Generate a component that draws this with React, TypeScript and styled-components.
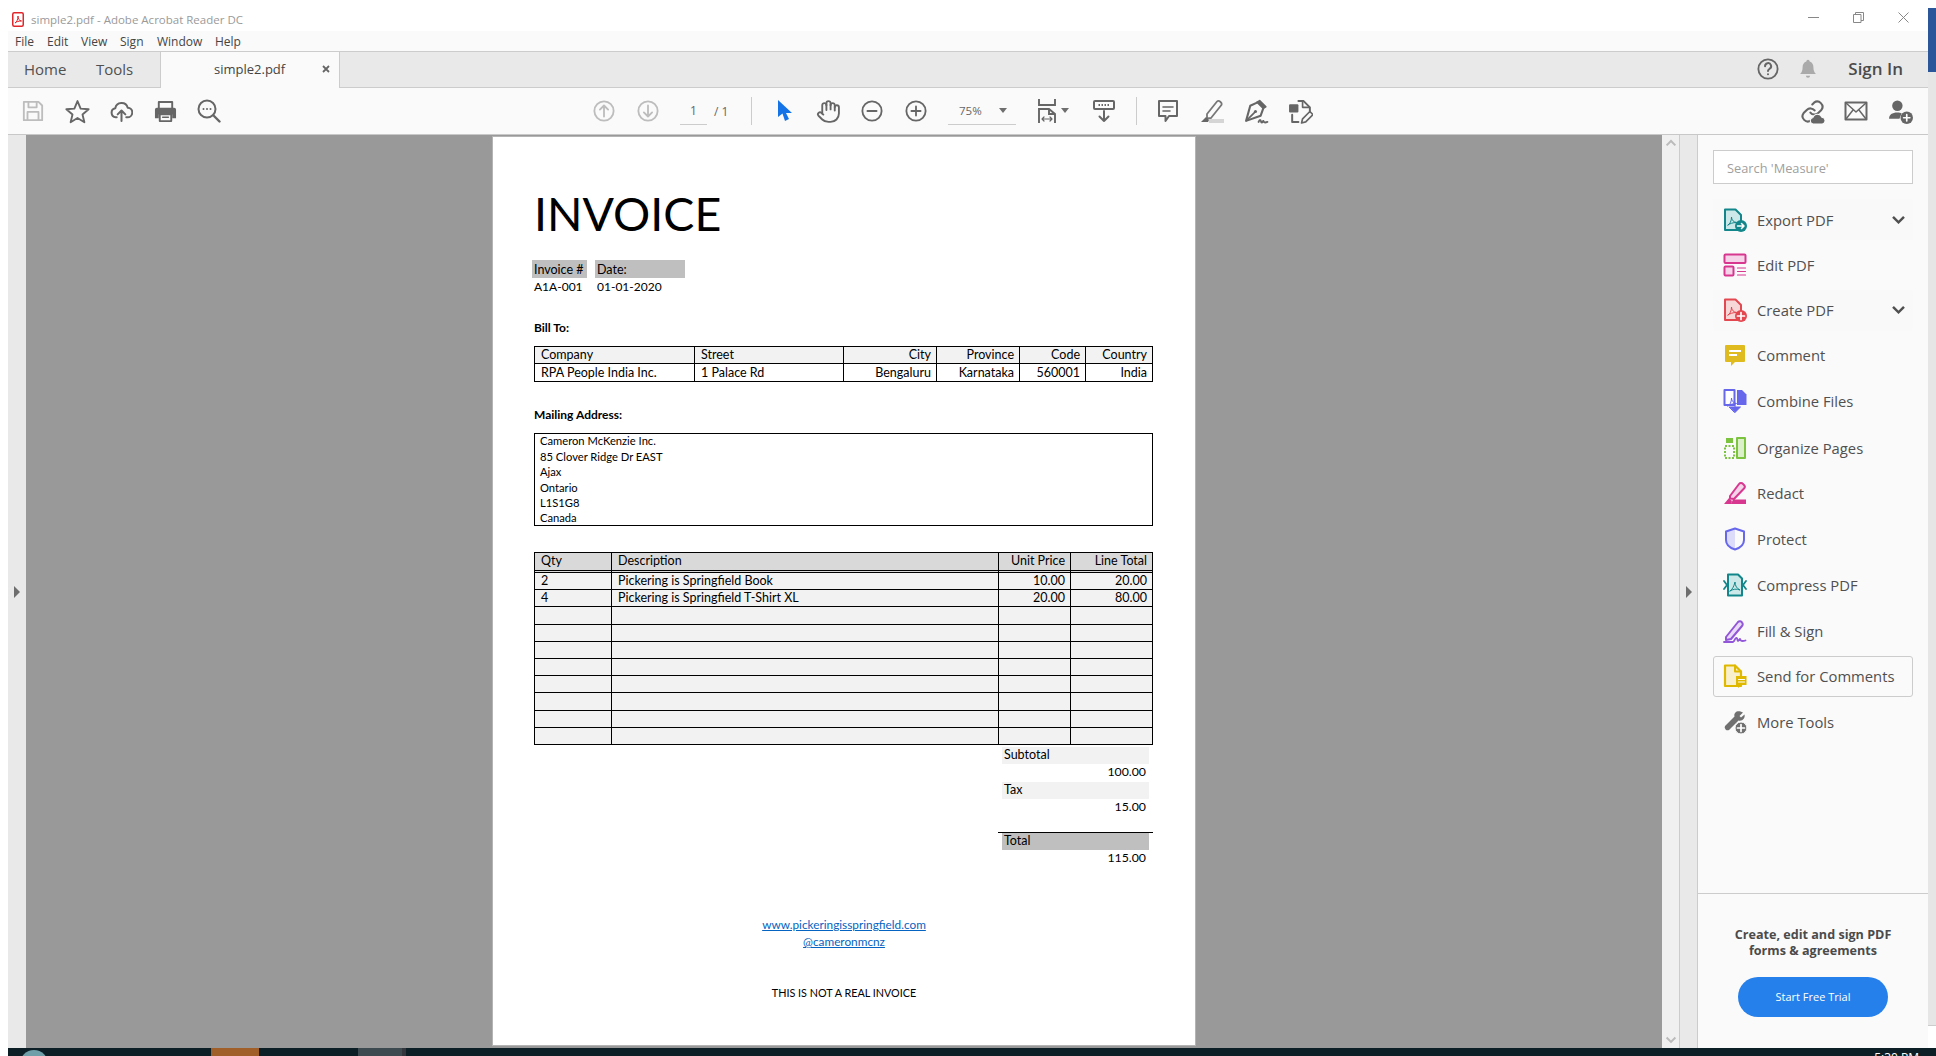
import React from "react";
import styled, { createGlobalStyle } from "styled-components";
import { Hand } from "lucide-react";

const Global = createGlobalStyle`
  html, body { margin: 0; padding: 0; background: #fff; overflow: hidden; }
  * { box-sizing: border-box; }
`;

const UI = `"Open Sans", "Noto Sans", sans-serif`;
const DOC = `Lato, "Open Sans", sans-serif`;

const Shell = styled.div`
  display: grid;
  width: 1936px;
  height: 1056px;
  grid-template-columns: 8px 1920px 8px;
  grid-template-rows: 1048px 8px;
  overflow: hidden;
  font-family: ${UI};
  color: #4b4b4b;
  background: #fff;
`;
const Win = styled.div`
  grid-column: 2;
  grid-row: 1;
  display: flex;
  flex-direction: column;
  min-height: 0;
`;
const Edge = styled.div`
  grid-column: 3;
  grid-row: 1;
  display: flex;
  flex-direction: column;
`;
const EdgeBlue = styled.div`
  margin-top: 8px;
  height: 64px;
  background: #2b579a;
`;
const EdgeGray = styled.div`
  height: 954px;
  background: #e6e6e6;
  border-bottom: 1px solid #ccc;
`;
const TitleBar = styled.div`
  height: 31px;
  flex: none;
  display: flex;
  align-items: center;
  padding: 8px 0 0 4px;
  background: #fff;
`;
const TitleText = styled.span`
  margin-left: 7px;
  font-size: 11.5px;
  color: #9a9a9a;
`;
const WinControls = styled.div`
  margin-left: auto;
  display: flex;
  margin-right: 19px;
  margin-top: -5px;
  gap: 34px;
  align-items: center;
`;
const MenuBar = styled.div`
  height: 21px;
  flex: none;
  display: flex;
  align-items: center;
  padding-left: 7px;
  background: #fafafa;
  border-bottom: 1px solid #ccc;
`;
const MenuItem = styled.span<{ $w: number }>`
  width: ${(p) => p.$w}px;
  font-size: 12px;
  color: #444;
`;
const TabBar = styled.div`
  height: 36px;
  flex: none;
  display: flex;
  background: #e9e9e9;
  border-bottom: 1px solid #ccc;
  font-size: 15px;
  align-items: stretch;
`;
const NavTab = styled.div<{ $w: number; $pl: number }>`
  width: ${(p) => p.$w}px;
  padding: 0 0 2px ${(p) => p.$pl}px;
  display: flex;
  align-items: center;
  color: #505050;
`;
const ActiveTab = styled.div`
  width: 180px;
  height: 36px;
  background: #fafafa;
  border-left: 1px solid #ccc;
  border-right: 1px solid #ccc;
  display: flex;
  align-items: center;
  padding: 0 0 2px 53px;
  font-size: 13px;
  color: #444;
`;
const TabClose = styled.span`
  margin-left: auto;
  margin-right: 9px;
  display: flex;
`;
const TabRight = styled.div`
  margin-left: auto;
  display: flex;
  align-items: center;
  padding: 0 25px 1px 0;
`;
const SignIn = styled.span`
  margin-left: 18px;
  padding-bottom: 1px;
  font-size: 17px;
  font-weight: 600;
  color: #4b4b4b;
`;
const Toolbar = styled.div`
  height: 47px;
  flex: none;
  display: flex;
  align-items: center;
  padding: 0 6px 0 3px;
  background: #fafafa;
  border-bottom: 1px solid #c8c8c8;
`;
const Tool = styled.div<{ $ml?: number }>`
  width: 44px;
  height: 36px;
  flex: none;
  display: flex;
  align-items: center;
  justify-content: center;
  margin-left: ${(p) => p.$ml ?? 0}px;
  position: relative;
`;
const PageField = styled.div`
  margin-left: 10px;
  width: 27px;
  height: 28px;
  border-bottom: 1px solid #ccc;
  display: flex;
  align-items: center;
  justify-content: center;
  font-size: 12px;
  color: #666;
`;
const PageTotal = styled.span`
  margin-left: 7px;
  width: 16px;
  font-size: 12px;
  color: #666;
  white-space: nowrap;
`;
const Sep = styled.div<{ $ml: number }>`
  width: 1px;
  height: 28px;
  background: #ccc;
  margin-left: ${(p) => p.$ml}px;
`;
const ZoomField = styled.div`
  margin-left: 10px;
  width: 68px;
  height: 28px;
  border-bottom: 1px solid #ccc;
  display: flex;
  align-items: center;
  padding-left: 11px;
  font-size: 11.5px;
  color: #666;
`;
const Caret = styled.span`
  margin-left: auto;
  margin-right: 9px;
  width: 0;
  height: 0;
  border-left: 4px solid transparent;
  border-right: 4px solid transparent;
  border-top: 5px solid #6e6e6e;
`;
const FitCaret = styled(Caret)`
  position: absolute;
  right: 0;
  top: 15px;
  margin: 0;
`;
const RightTools = styled.div`
  margin-left: auto;
  display: flex;
`;
const Body = styled.div`
  flex: 1;
  min-height: 0;
  display: flex;
`;
const LeftGutter = styled.div`
  width: 18px;
  flex: none;
  background: #e9e9e9;
  display: flex;
  align-items: center;
  justify-content: center;
`;
const RightArrow = styled.span`
  width: 0;
  height: 0;
  border-top: 6px solid transparent;
  border-bottom: 6px solid transparent;
  border-left: 6px solid #6e6e6e;
`;
const Canvas = styled.div`
  width: 1636px;
  flex: none;
  background: #999;
  padding-top: 2px;
  display: flex;
  justify-content: center;
  align-items: flex-start;
`;
const Page = styled.div`
  width: 702px;
  height: 908px;
  background: #fff;
  padding: 46px 41px 0 41px;
  display: flex;
  flex-direction: column;
  font-family: ${DOC};
  font-size: 12.5px;
  color: #000;
  box-shadow: 0 0 0 1px #b4b4b4;
`;
const InvoiceTitle = styled.h1`
  margin: 0;
  height: 60px;
  line-height: 60px;
  font-size: 46.5px;
  font-weight: 400;
  font-family: ${DOC};
  color: #000;
`;
const MetaGrid = styled.div`
  margin: 17px 0 0 -2px;
  display: grid;
  grid-template-columns: 55px 90px;
  column-gap: 8px;
  grid-auto-rows: 18px;
`;
const MetaHead = styled.div`
  background: #bfbfbf;
  padding-left: 2px;
  line-height: 19px;
`;
const MetaValue = styled.div`
  padding-left: 2px;
  line-height: 18px;
  font-size: 12px;
`;
const SectionLabel = styled.div<{ $mt: number }>`
  margin-top: ${(p) => p.$mt}px;
  height: 16px;
  line-height: 16px;
  font-weight: 700;
  font-size: 12px;
`;
const DataGrid = styled.div<{ $cols: string; $mt: number }>`
  margin-top: ${(p) => p.$mt}px;
  display: grid;
  width: 619px;
  grid-template-columns: ${(p) => p.$cols};
  border-top: 1px solid #000;
  border-left: 1px solid #000;
`;
const Cell = styled.div<{ $right?: boolean; $bg?: string; $h: number; $lh: number; $double?: boolean }>`
  height: ${(p) => p.$h}px;
  background: ${(p) => p.$bg ?? "#fff"};
  border-right: 1px solid #000;
  border-bottom: ${(p) => (p.$double ? "3px double #000" : "1px solid #000")};
  padding: 0 5px 0 6px;
  text-align: ${(p) => (p.$right ? "right" : "left")};
  line-height: ${(p) => p.$lh}px;
  overflow: hidden;
  white-space: nowrap;
`;
const AddressBox = styled.div`
  margin-top: 10px;
  width: 619px;
  height: 93px;
  border: 1px solid #000;
  padding-left: 5px;
  line-height: 15.4px;
  font-size: 11.2px;
  display: flex;
  flex-direction: column;
  justify-content: center;
`;
const AddressLine = styled.div`
  flex: none;
`;
const Totals = styled.div`
  margin: 2px 0 0 468px;
  width: 147px;
  display: flex;
  flex-direction: column;
`;
const TotalLabel = styled.div<{ $bg: string }>`
  height: 17px;
  line-height: 16px;
  background: ${(p) => p.$bg};
  padding-left: 2px;
`;
const TotalValue = styled.div`
  height: 18px;
  line-height: 16px;
  text-align: right;
  padding-right: 3px;
  font-size: 12.3px;
`;
const GrandTotal = styled.div`
  margin: 15px -4px 0 -4px;
  border-top: 1px solid #000;
  padding: 0 4px;
`;
const FooterLink = styled.a<{ $mt: number }>`
  margin-top: ${(p) => p.$mt}px;
  height: 16px;
  line-height: 16px;
  font-size: 11.8px;
  text-align: center;
  color: #0563c1;
  text-decoration: underline;
  align-self: center;
`;
const Disclaimer = styled.div`
  margin-top: 35px;
  height: 16px;
  line-height: 16px;
  font-size: 10.8px;
  text-align: center;
`;
const ScrollTrack = styled.div`
  width: 18px;
  flex: none;
  background: #f0f0f0;
  border-right: 1px solid #ccc;
  display: flex;
  flex-direction: column;
  justify-content: space-between;
  align-items: center;
  padding: 4px 0;
`;
const RightGutter = styled.div`
  width: 18px;
  flex: none;
  background: #e9e9e9;
  border-right: 1px solid #ccc;
  display: flex;
  align-items: center;
  justify-content: center;
`;
const Panel = styled.div`
  width: 230px;
  flex: none;
  background: #fafafa;
  display: flex;
  flex-direction: column;
`;
const PanelMain = styled.div`
  flex: 1;
  padding: 15px 15px 0;
`;
const SearchBox = styled.div`
  height: 34px;
  width: 200px;
  background: #fff;
  border: 1px solid #ccc;
  padding-left: 13px;
  line-height: 34px;
  font-size: 12.8px;
  color: #a0a0a0;
`;
const ToolList = styled.div`
  margin-top: 15px;
  display: flex;
  flex-direction: column;
  gap: 4.25px;
`;
const ToolRow = styled.div<{ $boxed?: boolean; $tint?: boolean }>`
  height: 41px;
  flex: none;
  display: flex;
  align-items: center;
  padding: 0 9px;
  gap: 10px;
  border-radius: 3px;
  font-size: 14.8px;
  color: #505050;
  background: ${(p) => (p.$tint ? "#f9f9f9" : "transparent")};
  border: 1px solid ${(p) => (p.$boxed ? "#ccc" : "transparent")};
  &:nth-child(6) {
    margin-top: 1.75px;
  }
  &:nth-child(n + 7) {
    margin-top: 0.55px;
  }
`;
const ToolChevron = styled.span`
  margin-left: auto;
  margin-right: -2.5px;
  display: flex;
`;
const Promo = styled.div`
  height: 155px;
  flex: none;
  border-top: 1px solid #ccc;
  padding-top: 33px;
  display: flex;
  flex-direction: column;
  align-items: center;
`;
const PromoText = styled.div`
  font-size: 12.6px;
  font-weight: 700;
  line-height: 15.5px;
  text-align: center;
  color: #4b4b4b;
`;
const TrialButton = styled.button`
  margin-top: 19px;
  width: 150px;
  height: 40px;
  border: none;
  border-radius: 20px;
  background: #2680eb;
  color: #fff;
  padding: 0 0 2px;
  font-family: ${UI};
  font-size: 11px;
`;
const Taskbar = styled.div`
  grid-column: 2 / 4;
  grid-row: 2;
  background: #0c1f26;
  display: flex;
  overflow: hidden;
  padding-left: 12px;
`;
const Orb = styled.div`
  width: 28px;
  height: 28px;
  margin-top: 2px;
  flex: none;
  border-radius: 50%;
  background: #6f9fa8;
`;
const TaskApp = styled.div<{ $ml: number; $w: number; $bg: string }>`
  margin-left: ${(p) => p.$ml}px;
  width: ${(p) => p.$w}px;
  flex: none;
  background: ${(p) => p.$bg};
`;
const Clock = styled.div`
  margin-left: auto;
  padding-right: 17px;
  padding-top: 3px;
  font-size: 12px;
  line-height: 14px;
  color: #fff;
  font-family: ${UI};
`;

const G = "#666";
const L = "#bdbdbd";

type S = { w?: number; h?: number; children: React.ReactNode };
const Svg = ({ w = 24, h = 24, children }: S) => (
  <svg width={w} height={h} viewBox="0 0 24 24" fill="none" strokeLinecap="round" strokeLinejoin="round">
    {children}
  </svg>
);

const PdfMark = () => (
  <svg width="12" height="15" viewBox="0 0 12 15" fill="none">
    <rect x=".75" y=".75" width="10.5" height="13.5" rx="1.5" stroke="#e0262a" strokeWidth="1.5" />
    <path d="M3 11c2-1 3-4 3-7 0 3 1 4.500 3.500 5-3 0-5 .7-6.500 2z" stroke="#e0262a" />
  </svg>
);

const IconSave = () => (
  <Svg w={22} h={22}>
    <g stroke={L} strokeWidth="2">
      <path d="M2 2h16l4 4v16H2z" />
      <path d="M7 2v6h9V2M6 22v-9h12v9" />
    </g>
  </Svg>
);
const IconStar = () => (
  <Svg w={25} h={25}>
    <path d="M12 2l3 7.200 7.700.6-5.900 5 1.800 7.500L12 18.300 5.400 22.300l1.800-7.500-5.900-5L9 9.200z" stroke={G} strokeWidth="1.800" />
  </Svg>
);
const IconUpload = () => (
  <Svg w={23} h={23}>
    <g stroke={G} strokeWidth="2.100">
      <path d="M7 18H6A4.700 4.700 0 0 1 5.500 8.700a6.700 6.700 0 0 1 13-.7A5 5 0 0 1 18 18h-1" />
      <path d="M12 22V11M8 15l4-4 4 4" />
    </g>
  </Svg>
);
const IconPrint = () => (
  <Svg w={23} h={23}>
    <path d="M5 8V2h14v6" stroke={G} strokeWidth="2" />
    <path d="M3 8h18a2 2 0 0 1 2 2v9h-4v-4H5v4H1v-9a2 2 0 0 1 2-2z" fill={G} />
    <path d="M6 15h12v7H6z" stroke={G} strokeWidth="2" />
    <path d="M9 18h6" stroke={G} strokeWidth="1.500" />
  </Svg>
);
const IconSearch = () => (
  <Svg w={24} h={24}>
    <circle cx="10" cy="10" r="8.500" stroke={G} strokeWidth="2" />
    <path d="M16.500 16.500l6 6" stroke={G} strokeWidth="2.400" />
    <path d="M6.500 10h.01M10 10h.01M13.500 10h.01" stroke={G} strokeWidth="2" />
  </Svg>
);
const IconArrowCircle = ({ down }: { down?: boolean }) => (
  <Svg w={22} h={22}>
    <circle cx="12" cy="12" r="10.500" stroke={L} strokeWidth="2" />
    <path d={down ? "M12 6v12M7.500 13.500L12 18l4.500-4.500" : "M12 18V6M7.500 10.500L12 6l4.500 4.500"} stroke={L} strokeWidth="2" />
  </Svg>
);
const IconCursor = () => (
  <Svg w={24} h={24}>
    <path d="M6 1v17l4.500-3.500L13 22l4-2-3-6h6z" fill="#1473e6" />
  </Svg>
);
const IconZoom = ({ plus }: { plus?: boolean }) => (
  <Svg w={22} h={22}>
    <circle cx="12" cy="12" r="10.500" stroke={G} strokeWidth="2" />
    <path d={plus ? "M7 12h10M12 7v10" : "M7 12h10"} stroke={G} strokeWidth="2" />
  </Svg>
);
const IconFit = () => (
  <Svg w={24} h={26}>
    <g stroke={G} strokeWidth="1.900" strokeLinecap="butt" strokeLinejoin="miter">
      <path d="M4 0v6h16V0" />
      <path d="M4 24V10h10l6 5v9" />
      <path d="M14 10v5h6" />
    </g>
    <path d="M7 20h10M9 18l-2 2 2 2M15 18l2 2-2 2" stroke={G} strokeWidth="1.200" />
  </Svg>
);
const IconRead = () => (
  <Svg w={24} h={24}>
    <rect x="2" y="2" width="20" height="8" rx="1" stroke={G} strokeWidth="2" />
    <path d="M6.500 6h11" stroke={G} strokeWidth="2" strokeDasharray="1.500 1.500" strokeLinecap="butt" />
    <path d="M12 12v10M7.500 17.500L12 22l4.500-4.500" stroke={G} strokeWidth="2" />
  </Svg>
);
const IconComment = () => (
  <Svg w={24} h={24}>
    <path d="M3 2h18v15h-8l-3.500 5v-5H3z" stroke={G} strokeWidth="2" />
    <path d="M7 8h10M7 12h7" stroke={G} strokeWidth="1.600" />
  </Svg>
);
const IconHighlight = () => (
  <Svg w={24} h={24}>
    <path d="M7 15L17 2.500a2 2 0 0 1 3 0l1 1a2 2 0 0 1 0 3L11 19l-4 .5z" stroke="#777" strokeWidth="1.800" />
    <path d="M1 23l5-5 3 3-1 2z" fill="#666" />
    <rect x="9" y="20" width="15" height="4" fill="#d5d5d5" />
  </Svg>
);
const IconSign = () => (
  <Svg w={25} h={25}>
    <path d="M15 1.500l6 6-2.500 1.500-6-6z" fill={G} stroke={G} strokeWidth="1.500" />
    <path d="M12.500 3.500L6 6.500 2 21l14-5 2.500-7" stroke={G} strokeWidth="2" />
    <path d="M2.500 20.500L10 13" stroke={G} strokeWidth="1.600" />
    <circle cx="11" cy="12" r="1.500" fill={G} />
    <path d="M14 22c1-2.500 2-2.500 2.500 0 .4 1.500 1.300 0 2-1 .5 1.500 1.500 2 4 1" stroke={G} strokeWidth="1.800" />
  </Svg>
);
const IconEditDoc = () => (
  <Svg w={25} h={25}>
    <rect x="1" y="5" width="9" height="8" rx="1" fill={G} />
    <path d="M10 2h5l6 6v4M4 15v7h6" stroke={G} strokeWidth="1.900" />
    <path d="M14 2v6h6" stroke={G} strokeWidth="1.600" />
    <path d="M13 23l1-4 7-7 3 3-7 7z" stroke={G} strokeWidth="1.600" />
  </Svg>
);
const IconLink = () => (
  <Svg w={25} h={25}>
    <g stroke={G} strokeWidth="2">
      <path d="M10 13a5 5 0 0 0 7.500.5l3-3a5 5 0 0 0-7-7l-1.700 1.700" />
      <path d="M14 11a5 5 0 0 0-7.500-.5l-3 3a5 5 0 0 0 7 7l1.700-1.700" />
    </g>
    <path d="M12.500 24a3.200 3.200 0 0 1 0-6.300 4.500 4.500 0 0 1 8.500-.2 3.300 3.300 0 0 1 .5 6.500z" fill={G} stroke="#fafafa" />
  </Svg>
);
const IconMail = () => (
  <Svg w={24} h={24}>
    <rect x="1.500" y="3.500" width="21" height="17" stroke={G} strokeWidth="2" />
    <path d="M2 4l10 9 10-9M2 20l7-9M22 20l-7-9" stroke={G} strokeWidth="1.500" />
  </Svg>
);
const IconAddUser = () => (
  <Svg w={25} h={25}>
    <circle cx="9" cy="6.500" r="5" fill={G} />
    <path d="M1 19c0-4 3-6 8-6 2 0 3 .3 4 1l-2 5z" fill={G} />
    <circle cx="18" cy="18" r="6" fill={G} />
    <path d="M15 18h6M18 15v6" stroke="#fff" strokeWidth="1.600" />
  </Svg>
);
const IconHelp = () => (
  <Svg w={22} h={22}>
    <circle cx="12" cy="12" r="10.500" stroke={G} strokeWidth="2" />
    <path d="M8.800 9a3.300 3.300 0 1 1 5 2.700c-1.200.8-1.800 1.300-1.800 2.600M12 17.800h.01" stroke={G} strokeWidth="2.200" />
  </Svg>
);
const IconBell = () => (
  <Svg w={20} h={22}>
    <path d="M12 1a2 2 0 0 1 2 2c3 1 4.500 3.500 4.500 7 0 4 1 6 3 8H2.500c2-2 3-4 3-8 0-3.500 1.500-6 4.500-7a2 2 0 0 1 2-2z" fill="#aaa" />
    <path d="M9.500 20h5a2.500 2.500 0 0 1-5 0z" fill="#aaa" />
  </Svg>
);
const IconMin = () => (
  <svg width="11" height="11" viewBox="0 0 11 11">
    <path d="M0 5.500h11" stroke="#888" />
  </svg>
);
const IconRestore = () => (
  <svg width="11" height="11" viewBox="0 0 11 11" fill="none">
    <path d="M.5 2.500h7.500v8H.5zM2.500 2.500V.5h8v8H8" stroke="#888" />
  </svg>
);
const IconClose = () => (
  <svg width="11" height="11" viewBox="0 0 11 11">
    <path d="M.5.500l10 10M10.500.500l-10 10" stroke="#888" />
  </svg>
);
const IconTabX = () => (
  <svg width="8" height="8" viewBox="0 0 8 8">
    <path d="M1 1l6 6M7 1L1 7" stroke="#666" strokeWidth="1.800" />
  </svg>
);
const Chevron = ({ up, color, w = 12, sw = 2 }: { up?: boolean; color: string; w?: number; sw?: number }) => (
  <svg width={w} height={w * 0.65} viewBox="0 0 12 8" fill="none">
    <path d={up ? "M1.500 6.500L6 2l4.500 4.500" : "M1.500 1.500L6 6l4.500-4.500"} stroke={color} strokeWidth={sw} />
  </svg>
);

const Swirl = ({ c }: { c: string }) => (
  <path d="M5 17c2-1 3.500-4 3.500-8 0 3 2 5 5 5.500-3.500 0-6.500 1-8.500 2.500z" stroke={c} strokeWidth="1" />
);
const TExport = () => (
  <Svg>
    <path d="M2 1.500h10.500L18 7v15H2z" fill="#cde8e8" stroke="#12868a" strokeWidth="2" />
    <Swirl c="#12868a" />
    <circle cx="18" cy="18" r="6" fill="#12868a" />
    <path d="M14.500 18h6M18.500 15.500L21 18l-2.500 2.500" stroke="#fff" strokeWidth="1.500" />
  </Svg>
);
const TEdit = () => (
  <Svg>
    <rect x="1.500" y="1.500" width="21" height="8.500" rx="1" fill="#f5d3e8" stroke="#d83790" strokeWidth="2" />
    <rect x="1.500" y="13.500" width="9" height="9" rx="1" fill="#f5d3e8" stroke="#d83790" strokeWidth="2" />
    <path d="M14.500 15h8M14.500 18.500h8M14.500 22h8" stroke="#d83790" strokeWidth="1.200" />
  </Svg>
);
const TCreate = () => (
  <Svg>
    <path d="M2 1.500h10.500L18 7v15H2z" fill="#f8d7d9" stroke="#e34850" strokeWidth="2" />
    <Swirl c="#e34850" />
    <circle cx="18" cy="18" r="6" fill="#e34850" />
    <path d="M14.500 18h7M18 14.500v7" stroke="#fff" strokeWidth="1.700" />
  </Svg>
);
const TComment = () => (
  <Svg>
    <path d="M3 2h18a1 1 0 0 1 1 1v15a1 1 0 0 1-1 1h-9l-4 4v-4H3a1 1 0 0 1-1-1V3a1 1 0 0 1 1-1z" fill="#e0bb1f" />
    <path d="M6 8h12M6 12h8" stroke="#fff" strokeWidth="1.800" strokeLinecap="butt" />
  </Svg>
);
const TCombine = () => (
  <Svg>
    <path d="M1.500 1h10v15h-10z" fill="#fff" stroke="#6767ec" strokeWidth="2" />
    <Swirl c="#6767ec" />
    <path d="M14 1h5l4.500 4.500V16H14z" fill="#6767ec" />
    <path d="M12 15v4M6.500 18h11L12 23.500z" fill="#6767ec" stroke="#6767ec" />
  </Svg>
);
const TOrganize = () => (
  <Svg>
    <path d="M2 10h9v12H2z" stroke="#7cc33f" strokeWidth="2" strokeDasharray="2 1.500" strokeLinecap="butt" />
    <path d="M14 2h8v20h-8z" fill="#dbf0c8" stroke="#7cc33f" strokeWidth="2" />
    <path d="M3 2h7v5H3z" fill="#7cc33f" />
  </Svg>
);
const TRedact = () => (
  <Svg>
    <path d="M7 15L16 3a2.500 2.500 0 0 1 4 0l1 1a2.500 2.500 0 0 1 0 3.500L11 18l-4-.5z" fill="#f5d3e8" stroke="#d83790" strokeWidth="2" />
    <path d="M1 23l5-6 3 3-1 3zM10 18.500h13V23H8z" fill="#d83790" />
  </Svg>
);
const TProtect = () => (
  <Svg>
    <path d="M12 1.500l9 3v8.500c0 4.500-4 8-9 9.500-5-1.500-9-5-9-9.500V4.500z" fill="#dcdcfa" />
    <path d="M12 2.500v19c4.500-1.500 8-4.500 8-8.500V5z" fill="#fafafa" />
    <path d="M12 1.500l9 3v8.500c0 4.500-4 8-9 9.500-5-1.500-9-5-9-9.500V4.500z" stroke="#6767ec" strokeWidth="2" />
  </Svg>
);
const TCompress = () => (
  <Svg>
    <path d="M5 1.500h10l4 4v17H5z" fill="#cde8e8" stroke="#12868a" strokeWidth="2" />
    <path d="M7 18c2-1 4-4.500 5-9 0 4 2 6.500 5 8-3.500-1.500-7-1-10 1z" stroke="#12868a" />
    <path d="M1 8l3 4-3 4M23 8l-3 4 3 4" stroke="#12868a" strokeWidth="1.800" />
  </Svg>
);
const TFill = () => (
  <Svg>
    <path d="M3 18L15 3a2.500 2.500 0 0 1 4 .5c1 1 1 2.500 0 3.500L8 20l-5 1z" fill="#eadcf9" stroke="#9256d9" strokeWidth="2" />
    <path d="M1 23h9M11 22c2-4 3-4 3.500-1 .5 2 1.500 0 2.500-1 .5 2 2 2.500 5.500 1.500" stroke="#9256d9" strokeWidth="1.800" />
  </Svg>
);
const TSend = () => (
  <Svg>
    <path d="M2 1.500h10l6 6V22H2z" fill="#f8f0cc" stroke="#dfb800" strokeWidth="2.200" />
    <path d="M12 1.500v6h6" stroke="#dfb800" strokeWidth="2" />
    <path d="M13 12h10.500v9H18l-3 3v-3h-2z" fill="#dfb800" />
    <path d="M15.500 15.500h6M15.500 18h6" stroke="#fff" strokeWidth="1" />
  </Svg>
);
const TMore = () => (
  <Svg>
    <path d="M21 1.500l-3.500 3.500 1.500 1.500L22.500 3.500c1 3.500-2 7-6 6L7 19a3 3 0 0 1-4-4l9.500-9.500c-1-4 2.500-6 6-5z" fill="#707070" transform="translate(-1 1)" />
    <circle cx="18" cy="18" r="6" fill="#707070" stroke="#fafafa" />
    <path d="M14.500 18h7M18 14.500v7" stroke="#fff" strokeWidth="1.700" />
  </Svg>
);

const tools: { label: string; icon: React.ReactNode; chevron?: boolean; boxed?: boolean }[] = [
  { label: "Export PDF", icon: <TExport />, chevron: true },
  { label: "Edit PDF", icon: <TEdit /> },
  { label: "Create PDF", icon: <TCreate />, chevron: true },
  { label: "Comment", icon: <TComment /> },
  { label: "Combine Files", icon: <TCombine /> },
  { label: "Organize Pages", icon: <TOrganize /> },
  { label: "Redact", icon: <TRedact /> },
  { label: "Protect", icon: <TProtect /> },
  { label: "Compress PDF", icon: <TCompress /> },
  { label: "Fill & Sign", icon: <TFill /> },
  { label: "Send for Comments", icon: <TSend />, boxed: true },
  { label: "More Tools", icon: <TMore /> },
];

const menus: [string, number][] = [
  ["File", 32],
  ["Edit", 34],
  ["View", 39],
  ["Sign", 37],
  ["Window", 58],
  ["Help", 40],
];

const billCols = "160px 149px 93px 83px 66px 67px";
const itemCols = "77px 387px 72px 82px";
const itemRows: string[][] = [
  ["2", "Pickering is Springfield Book", "10.00", "20.00"],
  ["4", "Pickering is Springfield T-Shirt XL", "20.00", "80.00"],
  ...Array.from({ length: 8 }, () => ["", "", "", ""]),
];

export default function App() {
  return (
    <Shell>
      <Global />
      <Win>
        <TitleBar>
          <PdfMark />
          <TitleText>simple2.pdf - Adobe Acrobat Reader DC</TitleText>
          <WinControls>
            <IconMin />
            <IconRestore />
            <IconClose />
          </WinControls>
        </TitleBar>
        <MenuBar>
          {menus.map(([m, w]) => (
            <MenuItem key={m} $w={w}>
              {m}
            </MenuItem>
          ))}
        </MenuBar>
        <TabBar>
          <NavTab $w={72} $pl={16}>Home</NavTab>
          <NavTab $w={80} $pl={16}>Tools</NavTab>
          <ActiveTab>
            simple2.pdf
            <TabClose>
              <IconTabX />
            </TabClose>
          </ActiveTab>
          <TabRight>
            <IconHelp />
            <Tool $ml={7}>
              <IconBell />
            </Tool>
            <SignIn>Sign In</SignIn>
          </TabRight>
        </TabBar>
        <Toolbar>
          <Tool><IconSave /></Tool>
          <Tool><IconStar /></Tool>
          <Tool><IconUpload /></Tool>
          <Tool><IconPrint /></Tool>
          <Tool><IconSearch /></Tool>
          <Tool $ml={351}><IconArrowCircle /></Tool>
          <Tool><IconArrowCircle down /></Tool>
          <PageField>1</PageField>
          <PageTotal>/ 1</PageTotal>
          <Sep $ml={21} />
          <Tool $ml={10}><IconCursor /></Tool>
          <Tool><Hand size={25} color={G} strokeWidth={1.8} /></Tool>
          <Tool><IconZoom /></Tool>
          <Tool><IconZoom plus /></Tool>
          <ZoomField>
            75%
            <Caret />
          </ZoomField>
          <Tool $ml={9}>
            <IconFit />
            <FitCaret />
          </Tool>
          <Tool $ml={13}><IconRead /></Tool>
          <Sep $ml={10} />
          <Tool $ml={9}><IconComment /></Tool>
          <Tool><IconHighlight /></Tool>
          <Tool><IconSign /></Tool>
          <Tool><IconEditDoc /></Tool>
          <RightTools>
            <Tool><IconLink /></Tool>
            <Tool><IconMail /></Tool>
            <Tool><IconAddUser /></Tool>
          </RightTools>
        </Toolbar>
        <Body>
          <LeftGutter>
            <RightArrow />
          </LeftGutter>
          <Canvas>
            <Page>
              <InvoiceTitle>INVOICE</InvoiceTitle>
              <MetaGrid>
                <MetaHead>Invoice #</MetaHead>
                <MetaHead>Date:</MetaHead>
                <MetaValue>A1A-001</MetaValue>
                <MetaValue>01-01-2020</MetaValue>
              </MetaGrid>
              <SectionLabel $mt={24}>Bill To:</SectionLabel>
              <DataGrid $cols={billCols} $mt={10}>
                <Cell $h={17} $lh={16} $bg="#f2f2f2">Company</Cell>
                <Cell $h={17} $lh={16} $bg="#f2f2f2">Street</Cell>
                <Cell $h={17} $lh={16} $bg="#f2f2f2" $right>City</Cell>
                <Cell $h={17} $lh={16} $bg="#f2f2f2" $right>Province</Cell>
                <Cell $h={17} $lh={16} $bg="#f2f2f2" $right>Code</Cell>
                <Cell $h={17} $lh={16} $bg="#f2f2f2" $right>Country</Cell>
                <Cell $h={18} $lh={17}>RPA People India Inc.</Cell>
                <Cell $h={18} $lh={17}>1 Palace Rd</Cell>
                <Cell $h={18} $lh={17} $right>Bengaluru</Cell>
                <Cell $h={18} $lh={17} $right>Karnataka</Cell>
                <Cell $h={18} $lh={17} $right>560001</Cell>
                <Cell $h={18} $lh={17} $right>India</Cell>
              </DataGrid>
              <SectionLabel $mt={25}>Mailing Address:</SectionLabel>
              <AddressBox>
                <AddressLine>Cameron McKenzie Inc.</AddressLine>
                <AddressLine>85 Clover Ridge Dr EAST</AddressLine>
                <AddressLine>Ajax</AddressLine>
                <AddressLine>Ontario</AddressLine>
                <AddressLine>L1S1G8</AddressLine>
                <AddressLine>Canada</AddressLine>
              </AddressBox>
              <DataGrid $cols={itemCols} $mt={26}>
                <Cell $h={20} $lh={16} $bg="#d9d9d9" $double>Qty</Cell>
                <Cell $h={20} $lh={16} $bg="#d9d9d9" $double>Description</Cell>
                <Cell $h={20} $lh={16} $bg="#d9d9d9" $double $right>Unit Price</Cell>
                <Cell $h={20} $lh={16} $bg="#d9d9d9" $double $right>Line Total</Cell>
                {itemRows.flatMap((r, i) => [
                  <Cell key={`${i}a`} $h={17.2} $lh={15.2} $bg="#f2f2f2">{r[0]}</Cell>,
                  <Cell key={`${i}b`} $h={17.2} $lh={15.2} $bg="#f2f2f2">{r[1]}</Cell>,
                  <Cell key={`${i}c`} $h={17.2} $lh={15.2} $bg="#f2f2f2" $right>{r[2]}</Cell>,
                  <Cell key={`${i}d`} $h={17.2} $lh={15.2} $bg="#f2f2f2" $right>{r[3]}</Cell>,
                ])}
              </DataGrid>
              <Totals>
                <TotalLabel $bg="#f2f2f2">Subtotal</TotalLabel>
                <TotalValue>100.00</TotalValue>
                <TotalLabel $bg="#f2f2f2">Tax</TotalLabel>
                <TotalValue>15.00</TotalValue>
                <GrandTotal>
                  <TotalLabel $bg="#bfbfbf">Total</TotalLabel>
                  <TotalValue>115.00</TotalValue>
                </GrandTotal>
              </Totals>
              <FooterLink $mt={49}>www.pickeringisspringfield.com</FooterLink>
              <FooterLink $mt={1}>@cameronmcnz</FooterLink>
              <Disclaimer>THIS IS NOT A REAL INVOICE</Disclaimer>
            </Page>
          </Canvas>
          <ScrollTrack>
            <Chevron up color="#bbb" />
            <Chevron color="#bbb" />
          </ScrollTrack>
          <RightGutter>
            <RightArrow />
          </RightGutter>
          <Panel>
            <PanelMain>
              <SearchBox>Search 'Measure'</SearchBox>
              <ToolList>
                {tools.map((t) => (
                  <ToolRow key={t.label} $boxed={t.boxed} $tint={t.chevron}>
                    {t.icon}
                    {t.label}
                    {t.chevron && (
                      <ToolChevron>
                        <Chevron color="#505050" w={15} />
                      </ToolChevron>
                    )}
                  </ToolRow>
                ))}
              </ToolList>
            </PanelMain>
            <Promo>
              <PromoText>
                Create, edit and sign PDF
                <br />
                forms &amp; agreements
              </PromoText>
              <TrialButton>Start Free Trial</TrialButton>
            </Promo>
          </Panel>
        </Body>
      </Win>
      <Edge>
        <EdgeBlue />
        <EdgeGray />
      </Edge>
      <Taskbar>
        <Orb />
        <TaskApp $ml={163} $w={48} $bg="#a05f28" />
        <TaskApp $ml={99} $w={44} $bg="#3d4a4f" />
        <TaskApp $ml={0} $w={4} $bg="#33363c" />
        <Clock>5:30 PM</Clock>
      </Taskbar>
    </Shell>
  );
}
